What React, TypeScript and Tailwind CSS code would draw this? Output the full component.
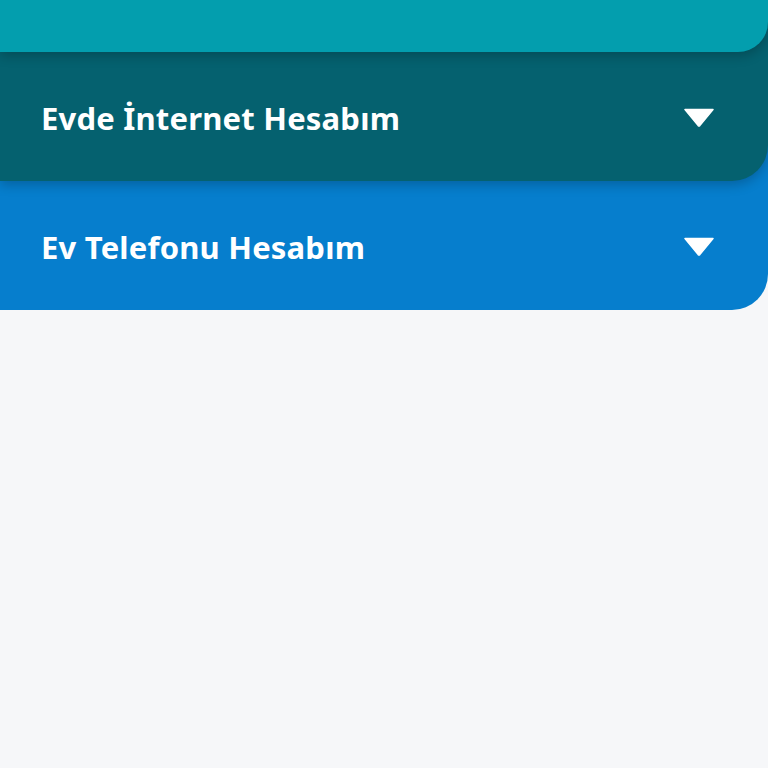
export default function App() {
  const rows = [
    { title: 'Evde İnternet Hesabım', bg: 'bg-[#05616f]', z: 'z-20', shadow: 'shadow-[0_4px_12px_rgba(0,0,0,0.22)]' },
    { title: 'Ev Telefonu Hesabım', bg: 'bg-[#067ecd]', z: 'z-10', shadow: '' },
  ];

  return (
    <div className="min-h-screen bg-[#f6f7f9] font-['Noto_Sans',sans-serif]">
      {/* collapsed header above */}
      <div className="relative z-30 h-[52px] bg-[#039eae] rounded-br-[30px] shadow-[0_4px_12px_rgba(0,0,0,0.22)]" />

      {rows.map((row) => (
        <div
          key={row.title}
          className={`relative ${row.z} -mt-[40px] pt-[40px] ${row.bg} rounded-br-[36px] ${row.shadow}`}
        >
          <div className="flex h-[129px] items-center justify-between pl-[41px] pr-[53px]">
            <span className="text-[31px] font-bold text-white leading-none tracking-[0.2px] pt-[3px]">{row.title}</span>
            <svg width="32" height="19" viewBox="0 0 32 19" className="mt-[2px]">
              <path d="M2 1.5 H30 L16.8 17.6 Q16 18.4 15.2 17.6 Z" fill="white" stroke="white" strokeWidth="1.5" strokeLinejoin="round" />
            </svg>
          </div>
        </div>
      ))}
    </div>
  );
}
